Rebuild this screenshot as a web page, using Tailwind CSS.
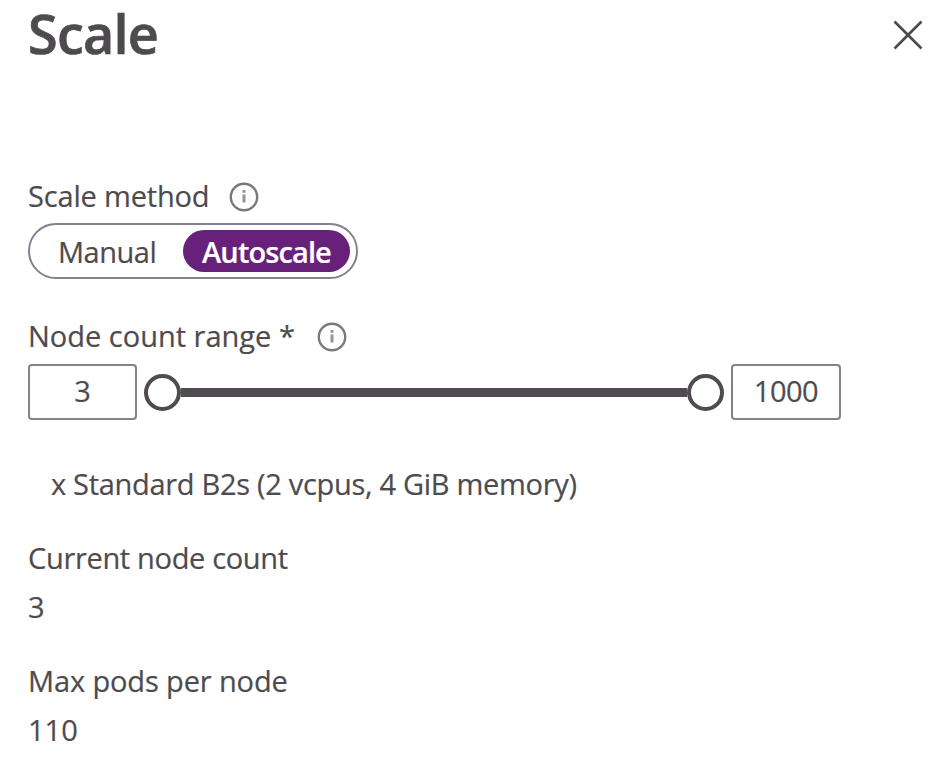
<!DOCTYPE html>
<html lang="en"><head><meta charset="utf-8"><title>Scale</title>
<script src="https://cdn.jsdelivr.net/npm/@tailwindcss/browser@4"></script></head>
<body class="bg-white">
<main class="h-[764px] w-[945px] bg-white pl-7 font-['Open_Sans','Noto_Sans',sans-serif] text-[29px] leading-10 whitespace-nowrap text-[#4e4b4e] [-webkit-text-stroke:0.2px]">
<header class="flex h-[176px] items-start justify-between pr-[21px]">
<h1 class="pt-px text-[54px] leading-[64px] font-semibold tracking-[-0.8px] [-webkit-text-stroke:0.7px]">Scale</h1>
<button aria-label="Close" class="mt-5"><svg class="block" width="31" height="31" fill="none" stroke="#4e4b4e" stroke-width="2.7"><path d="M1.5 1.5 28.5 28.5M28.5 1.5 1.5 28.5"/></svg></button>
</header>
<section class="h-[140px]">
<div class="flex h-[47px]">
<span class="w-[201px] tracking-[-0.17px]">Scale method</span>
<svg class="mt-[6px]" width="30" height="30" fill="none" stroke="#7d7880" stroke-width="2.4"><circle cx="15" cy="15" r="13.2"/><path d="M15 12.5v8M15 8v2.7" stroke="#9692a0" stroke-width="3"/></svg>
</div>
<div class="flex h-[56px] w-[330px] items-center rounded-full border-[2.5px] border-[#85808e] p-1">
<span class="w-[149px] pt-0.5 pl-6 tracking-[-0.5px]">Manual</span>
<span class="flex h-[42px] w-[167px] items-center justify-center rounded-full bg-[#68217a] pt-0.5 font-semibold tracking-[-0.9px] text-white">Autoscale</span>
</div>
</section>
<section class="h-[148px]">
<div class="flex h-[48px]">
<span class="w-[289px]">Node count range *</span>
<svg class="mt-[6px]" width="30" height="30" fill="none" stroke="#7d7880" stroke-width="2.4"><circle cx="15" cy="15" r="13.2"/><path d="M15 12.5v8M15 8v2.7" stroke="#9692a0" stroke-width="3"/></svg>
</div>
<div class="flex h-[56px] items-center">
<div class="flex h-[56px] w-[109px] items-center justify-center rounded border-2 border-[#85808e] pb-0.5">3</div>
<div class="ml-[7px] flex w-[580px] items-center">
<span class="size-[37px] rounded-full border-4 border-[#504b50]"></span>
<span class="h-[9px] flex-1 bg-[#504b50]"></span>
<span class="size-[37px] rounded-full border-4 border-[#504b50]"></span>
</div>
<div class="ml-[7px] flex h-[56px] w-[110px] items-center justify-center rounded border-2 border-[#85808e] pb-0.5 tracking-[-0.5px]">1000</div>
</div>
</section>
<p class="h-[74px] pl-[23px] tracking-[-0.3px]">x Standard B2s (2 vcpus, 4 GiB memory)</p>
<dl>
<dt class="h-[49px] tracking-[-0.33px]">Current node count</dt>
<dd class="h-[74px]">3</dd>
<dt class="h-[49px] tracking-[-0.13px]">Max pods per node</dt>
<dd>110</dd>
</dl>
</main></body></html>
